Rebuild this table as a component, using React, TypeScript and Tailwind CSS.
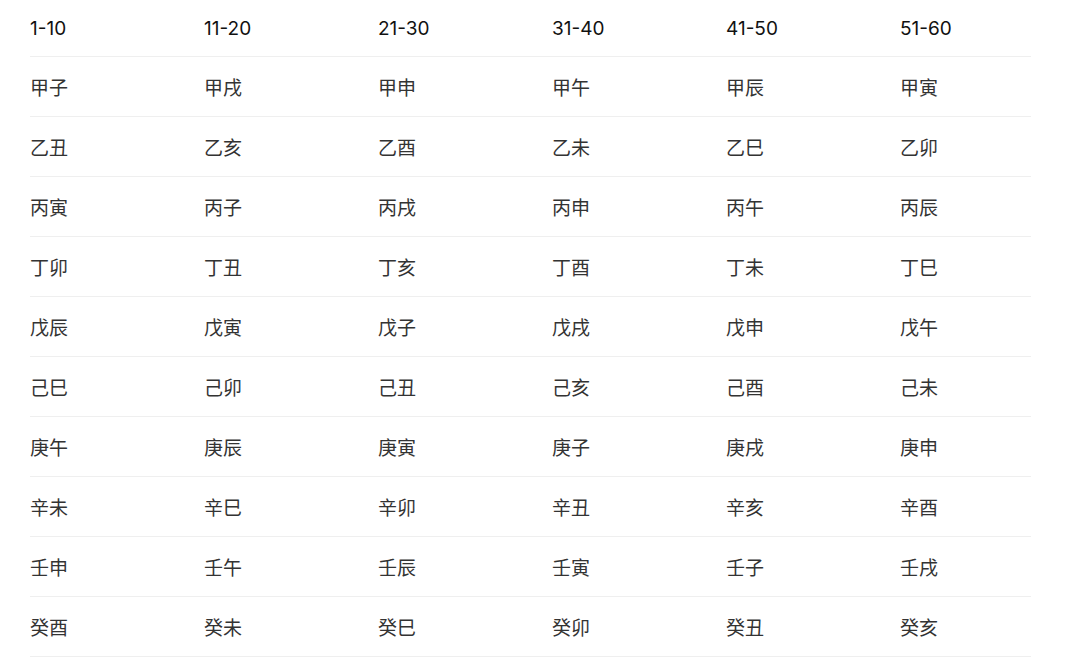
import React from 'react'

const headers = ['1-10', '11-20', '21-30', '31-40', '41-50', '51-60']

const stems = ['甲', '乙', '丙', '丁', '戊', '己', '庚', '辛', '壬', '癸']
const branches = ['子', '丑', '寅', '卯', '辰', '巳', '午', '未', '申', '酉', '戌', '亥']

// row r, column c -> the (c*10 + r)th pair of the sixty cycle
const pairAt = (r: number, c: number) => {
  const n = c * 10 + r
  return stems[n % 10] + branches[n % 12]
}

const font = { fontFamily: 'Inter, "Noto Sans CJK SC", sans-serif' }

export default function App() {
  return (
    <div className="w-[1080px] h-[669px] bg-white overflow-hidden" style={font}>
      <div className="ml-[30px] w-[1001px]">
        <div className="grid grid-cols-[174px_174px_174px_174px_174px_1fr] h-[57px] border-b border-[#efefef] items-center pt-[3px]">
          {headers.map(h => (
            <div key={h} className="text-[19px] font-normal text-[#111111]">
              {h}
            </div>
          ))}
        </div>
        {stems.map((_, r) => (
          <div
            key={r}
            className="grid grid-cols-[174px_174px_174px_174px_174px_1fr] h-[60px] border-b border-[#efefef] items-center pt-[6px]"
          >
            {headers.map((_, c) => (
              <div key={c} className="text-[19px] text-[#333333]">
                {pairAt(r, c)}
              </div>
            ))}
          </div>
        ))}
      </div>
    </div>
  )
}
